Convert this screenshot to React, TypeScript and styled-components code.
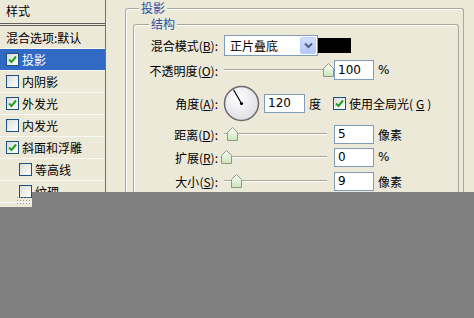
import styled, { createGlobalStyle } from "styled-components";

const GlobalStyle = createGlobalStyle`
  body {
    margin: 0;
    background: #ece9d8;
    font-family: "Noto Sans CJK SC", "Noto Sans", sans-serif;
    font-size: 12px;
    color: #000;
  }
`;

const Screen = styled.div`
  position: relative;
  width: 474px;
  height: 318px;
  overflow: hidden;
  display: flex;
  background: #ece9d8;
`;

const Sidebar = styled.div`
  width: 105px;
  flex: none;
  border-right: 1px solid #6f6f6f;
  display: flex;
  flex-direction: column;
`;

const SideHeader = styled.div`
  height: 23px;
  line-height: 22px;
  padding-left: 6px;
`;

const Divider = styled.div`
  height: 1px;
  border-top: 1px solid #5f5f5f;
  border-bottom: 1px solid #5f5f5f;
  margin-bottom: 1px;
`;

const SideRow = styled.div<{ $active?: boolean; $indent?: boolean }>`
  height: 21px;
  border-bottom: 1px solid #f8f7f1;
  display: flex;
  align-items: center;
  gap: 3px;
  padding-left: ${(p) => (p.$indent ? 19 : 6)}px;
  background: ${(p) => (p.$active ? "#316ac5" : "transparent")};
  color: ${(p) => (p.$active ? "#fff" : "#000")};
  white-space: nowrap;
`;

const Box = styled.span`
  width: 11px;
  height: 11px;
  border: 1px solid #1c5180;
  background: linear-gradient(135deg, #dcdcd7, #fff);
  display: inline-flex;
  align-items: center;
  justify-content: center;
  flex: none;
`;

const Grip = styled.div`
  width: 14px;
  height: 8px;
  margin: -7px 0 0 16px;
  background-image: radial-gradient(#9a9a90 0.8px, transparent 1px);
  background-size: 3px 3px;
`;

const Main = styled.div`
  flex: 1;
  padding: 8px 10px 0 19px;
`;

const Group = styled.div<{ $inner?: boolean }>`
  position: relative;
  height: 100%;
  border: 1px solid #aca899;
  border-bottom: none;
  border-radius: 3px 3px 0 0;
  box-shadow: inset 1px 1px 0 #fff;
  padding: ${(p) => (p.$inner ? "8px 0 0 0" : "15px 4px 0 7px")};
`;

const Legend = styled.span<{ $left: number }>`
  position: absolute;
  top: -9px;
  left: ${(p) => p.$left}px;
  padding: 0 2px;
  background: #ece9d8;
  color: #1f4fa8;
  line-height: 16px;
`;

const Form = styled.div`
  display: grid;
  grid-template-columns: 87px 1fr;
`;

const Label = styled.div<{ $h: number }>`
  height: ${(p) => p.$h}px;
  display: flex;
  align-items: center;
  justify-content: flex-end;
  padding-right: 3px;
  white-space: nowrap;
`;

const Controls = styled.div<{ $h: number }>`
  height: ${(p) => p.$h}px;
  display: flex;
  align-items: center;
`;

const Select = styled.div`
  margin-left: 3px;
  width: 90px;
  height: 19px;
  border: 1px solid #7f9db9;
  background: #fff;
  display: flex;
  align-items: center;
  justify-content: space-between;
  padding-left: 5px;
  box-sizing: content-box;
  padding-right: 1px;
  width: 86px;
`;

const DropButton = styled.span`
  width: 16px;
  height: 17px;
  border: 1px solid #b9cefa;
  border-radius: 2px;
  background: linear-gradient(#d2e0fd, #b4c8f6);
  display: flex;
  align-items: center;
  justify-content: center;
  box-sizing: border-box;
`;

const Swatch = styled.span`
  width: 33px;
  height: 15px;
  background: #000;
`;

const SliderWrap = styled.div`
  position: relative;
  width: 112px;
  height: 14px;
  margin-right: 1px;
`;

const Track = styled.div`
  position: absolute;
  left: 3px;
  right: 6px;
  top: 6px;
  height: 0;
  border-top: 1px solid #aca899;
  border-bottom: 1px solid #fff;
`;

const Thumb = styled.svg`
  position: absolute;
  top: 0;
`;

const Field = styled.div<{ $w: number; $h?: number }>`
  width: ${(p) => p.$w}px;
  height: ${(p) => p.$h ?? 17}px;
  border: 1px solid #7f9db9;
  background: #fff;
  font-family: "DejaVu Sans", sans-serif;
  font-size: 12px;
  display: flex;
  align-items: center;
  padding-left: 3px;
  box-sizing: content-box;
  padding-right: 0;
`;

const Unit = styled.span`
  margin-left: 4px;
  font-family: "Noto Sans CJK SC", sans-serif;
`;

const Pct = styled.span`
  margin-left: 4px;
  font-family: "DejaVu Sans", sans-serif;
`;

const Dial = styled.svg`
  margin-left: 2px;
  margin-right: 4px;
`;

const CheckLabel = styled.label`
  margin-left: 12px;
  display: flex;
  align-items: center;
  gap: 3px;
`;

const Shade = styled.div<{ $top: number; $left: number; $h?: number }>`
  position: absolute;
  top: ${(p) => p.$top}px;
  left: ${(p) => p.$left}px;
  right: 0;
  ${(p) => (p.$h ? `height: ${p.$h}px;` : "bottom: 0;")}
  background: #808080;
`;

function Check({ on }: { on?: boolean }) {
  return (
    <Box>
      {on && (
        <svg width="9" height="9" viewBox="0 0 9 9">
          <path d="M1 4.5 L3.5 7 L8 1.5" fill="none" stroke="#21a121" strokeWidth="2" />
        </svg>
      )}
    </Box>
  );
}

function Slider({ pos }: { pos: number }) {
  return (
    <SliderWrap>
      <Track />
      <Thumb width="11" height="14" viewBox="0 0 11 14" style={{ left: pos }}>
        <defs>
          <linearGradient id="tg" x1="0" y1="0" x2="0" y2="1">
            <stop offset="0" stopColor="#ffffff" />
            <stop offset="1" stopColor="#c9e4b8" />
          </linearGradient>
        </defs>
        <polygon points="0.5,5.5 5.5,0.5 10.5,5.5 10.5,13.5 0.5,13.5" fill="url(#tg)" stroke="#8a9a80" />
      </Thumb>
    </SliderWrap>
  );
}

function Mn({ text, key2 }: { text: string; key2: string }) {
  return (
    <>
      {text}(<u>{key2}</u>):
    </>
  );
}

const sideItems = [
  { label: "投影", on: true, active: true },
  { label: "内阴影", on: false },
  { label: "外发光", on: true },
  { label: "内发光", on: false },
  { label: "斜面和浮雕", on: true },
  { label: "等高线", on: false, indent: true },
  { label: "纹理", on: false, indent: true },
];

export default function App() {
  return (
    <Screen>
      <GlobalStyle />
      <Sidebar>
        <SideHeader>样式</SideHeader>
        <Divider />
        <SideRow>混合选项:默认</SideRow>
        {sideItems.map((it) => (
          <SideRow key={it.label} $active={it.active} $indent={it.indent}>
            <Check on={it.on} />
            {it.label}
          </SideRow>
        ))}
        <Grip />
      </Sidebar>
      <Main>
        <Group>
          <Legend $left={13}>投影</Legend>
          <Group $inner>
            <Legend $left={15}>结构</Legend>
            <Form>
              <Label $h={24}>
                <Mn text="混合模式" key2="B" />
              </Label>
              <Controls $h={24}>
                <Select>
                  正片叠底
                  <DropButton>
                    <svg width="9" height="7" viewBox="0 0 9 7">
                      <path d="M1 1.5 L4.5 5 L8 1.5" fill="none" stroke="#4d6185" strokeWidth="2" />
                    </svg>
                  </DropButton>
                </Select>
                <Swatch />
              </Controls>

              <Label $h={26}>
                <Mn text="不透明度" key2="O" />
              </Label>
              <Controls $h={26}>
                <Slider pos={102} />
                <Field $w={35} $h={18}>100</Field>
                <Pct>%</Pct>
              </Controls>

              <Label $h={40}>
                <Mn text="角度" key2="A" />
              </Label>
              <Controls $h={40}>
                <Dial width="37" height="37" viewBox="0 0 37 37">
                  <defs>
                    <radialGradient id="dg" cx="0.4" cy="0.35" r="0.7">
                      <stop offset="0" stopColor="#ffffff" />
                      <stop offset="1" stopColor="#dcdce4" />
                    </radialGradient>
                  </defs>
                  <circle cx="18.5" cy="18.5" r="17" fill="url(#dg)" stroke="#6b6b6b" strokeWidth="1.5" />
                  <line x1="18.5" y1="18.5" x2="10.5" y2="4.7" stroke="#000" strokeWidth="1.2" />
                  <circle cx="18.5" cy="18.5" r="1.6" fill="#000" />
                </Dial>
                <Field $w={36}>120</Field>
                <Unit>度</Unit>
                <CheckLabel>
                  <Check on />
                  使用全局光(<u>G</u>)
                </CheckLabel>
              </Controls>

              <Label $h={22}>
                <Mn text="距离" key2="D" />
              </Label>
              <Controls $h={22}>
                <Slider pos={6} />
                <Field $w={35}>5</Field>
                <Unit>像素</Unit>
              </Controls>

              <Label $h={24}>
                <Mn text="扩展" key2="R" />
              </Label>
              <Controls $h={24}>
                <Slider pos={0} />
                <Field $w={35}>0</Field>
                <Pct>%</Pct>
              </Controls>

              <Label $h={24}>
                <Mn text="大小" key2="S" />
              </Label>
              <Controls $h={24}>
                <Slider pos={10} />
                <Field $w={35}>9</Field>
                <Unit>像素</Unit>
              </Controls>
            </Form>
          </Group>
        </Group>
      </Main>
      <Shade $top={192} $left={32} $h={15} />
      <Shade $top={207} $left={0} />
    </Screen>
  );
}
